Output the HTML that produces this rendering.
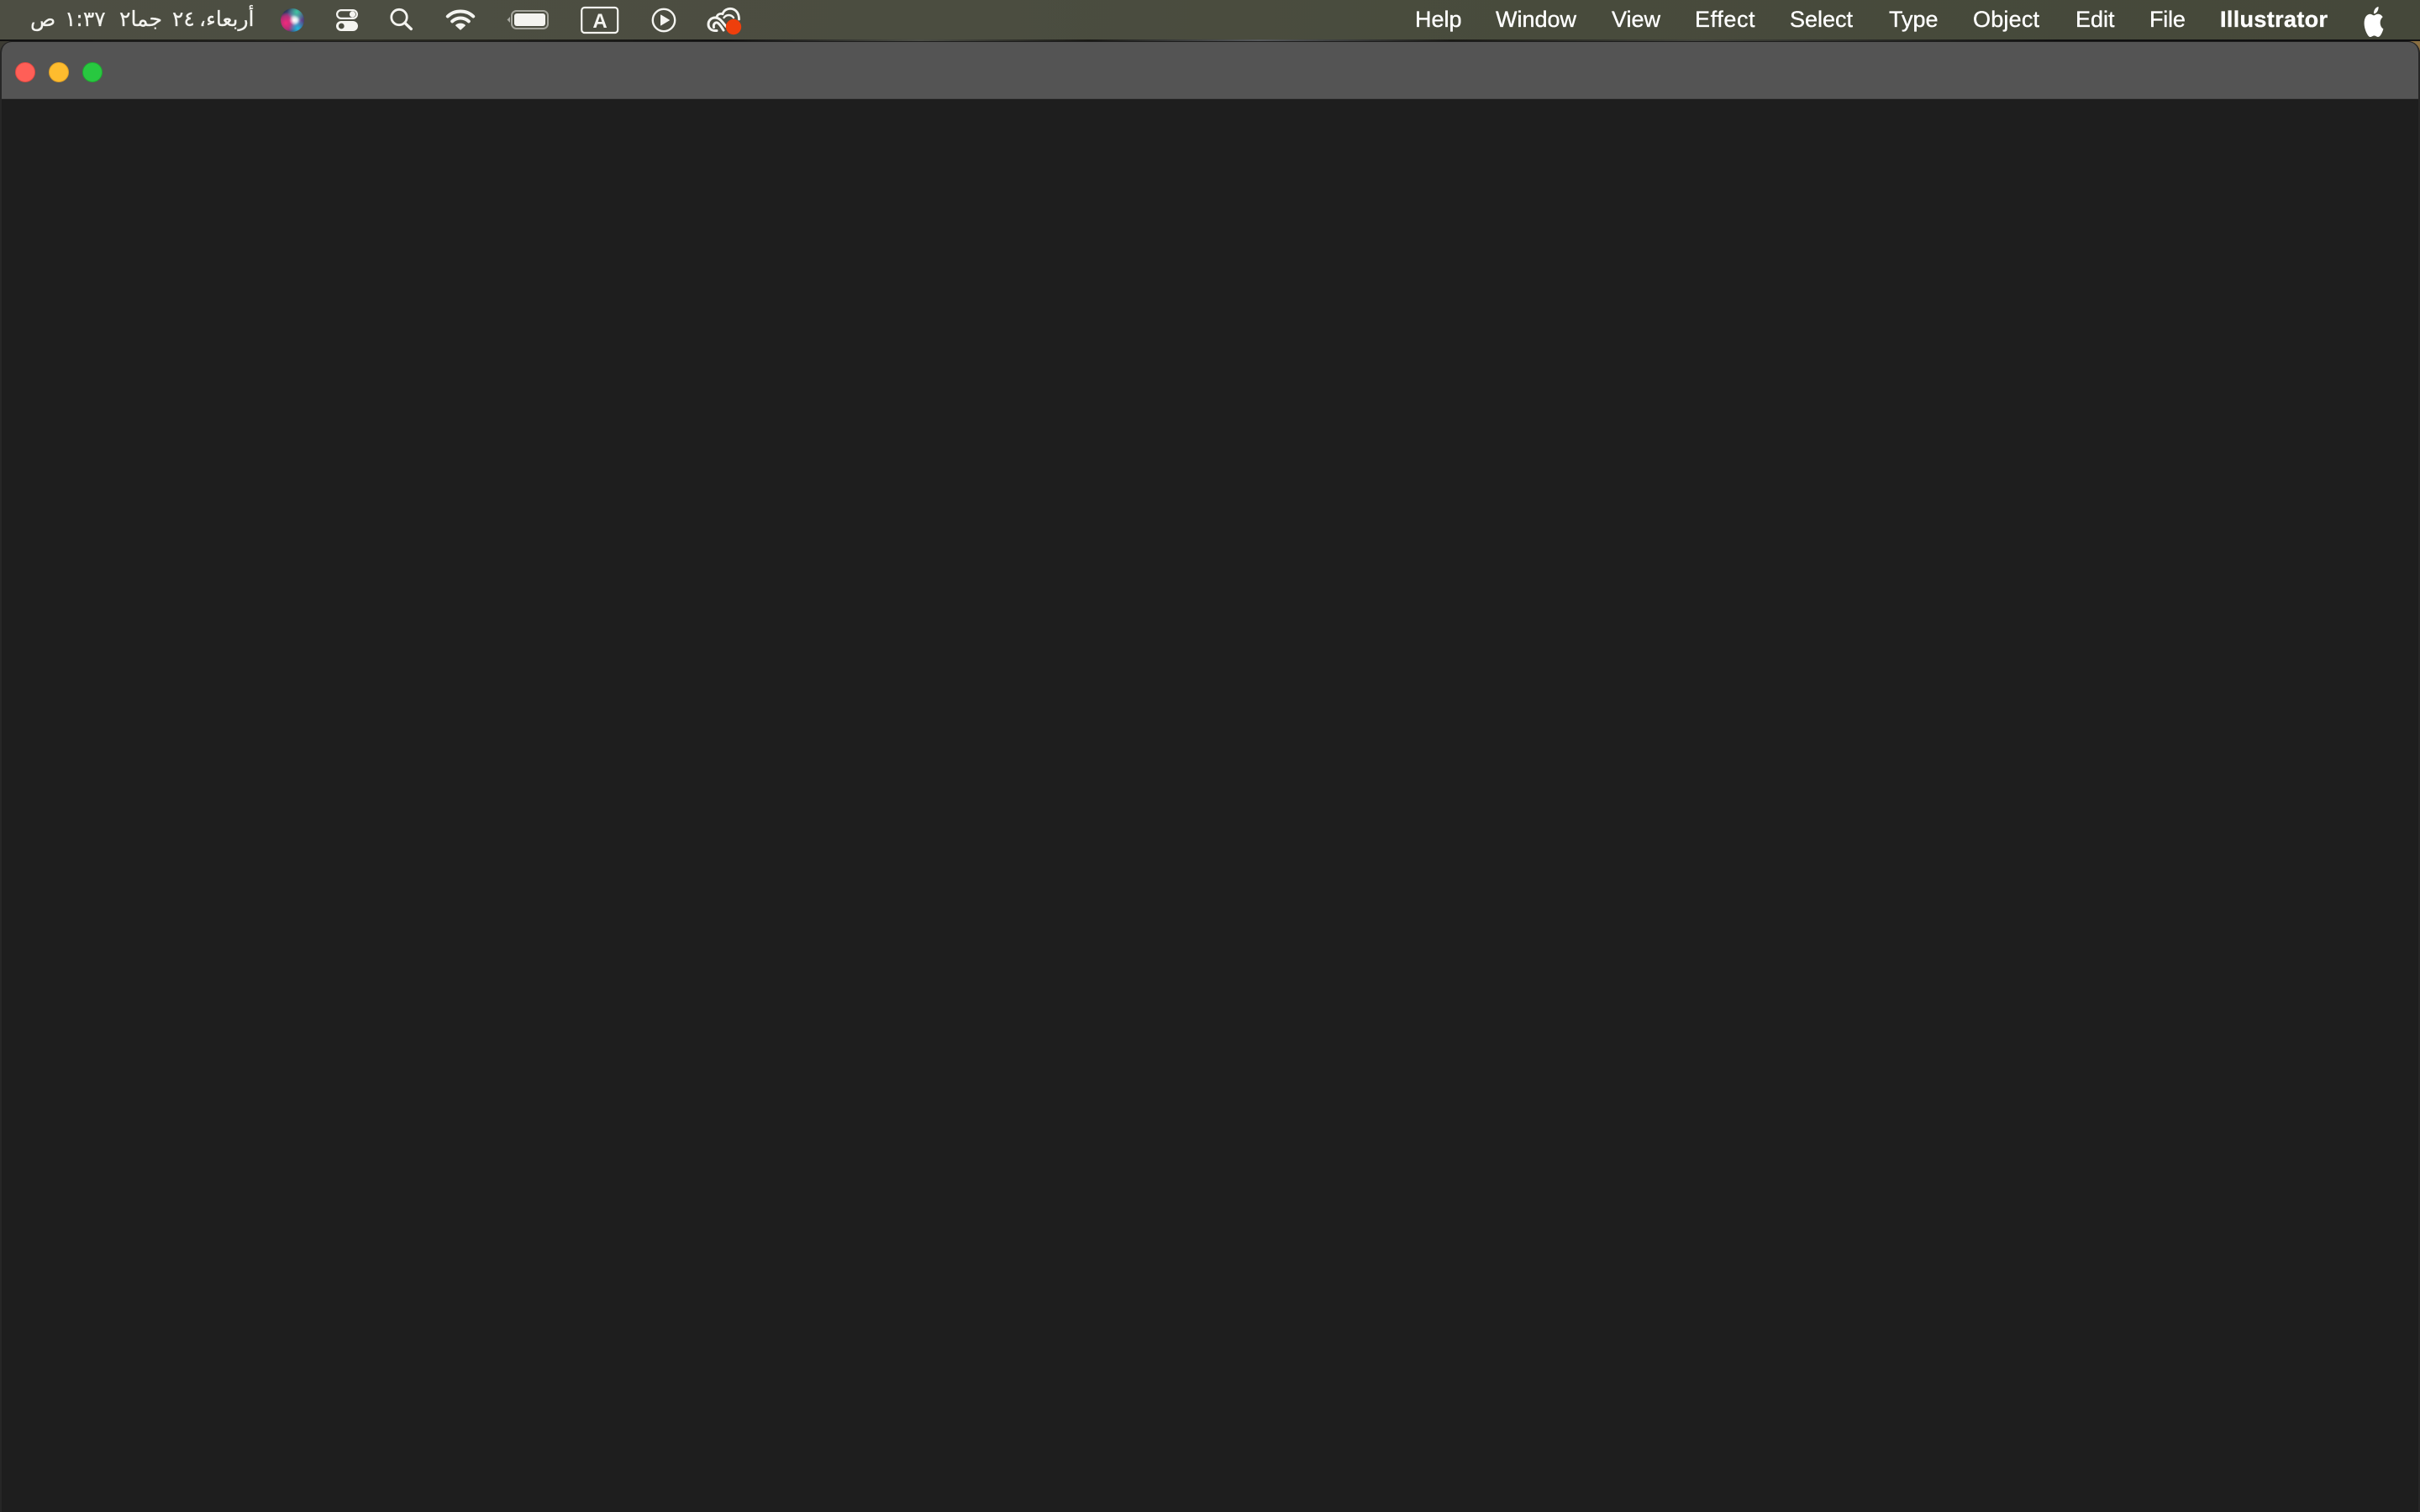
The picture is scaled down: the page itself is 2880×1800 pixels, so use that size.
<!DOCTYPE html>
<html lang="en">
<head>
<meta charset="utf-8">
<title>Illustrator</title>
<style>
html,body{margin:0;padding:0;width:2880px;height:1800px;overflow:hidden;background:#000;}
#bar{position:absolute;left:0;top:0;width:2880px;height:48px;background:linear-gradient(90deg,#4d4e43 0%,#4b4d40 40%,#484b3c 65%,#45483a 100%);}
#line{position:absolute;left:0;top:47px;width:2880px;height:2px;background:linear-gradient(90deg,#111 0%,#2a2a22 15%,#111 30%,#4a4c44 38%,#1a1a16 45%,#55585a 52%,#1a1a16 60%,#40423a 70%,#111 85%,#111 100%);}
#corner{position:absolute;right:0;top:48px;width:24px;height:24px;background:#8a6f42;}
#corner2{position:absolute;left:0;top:48px;width:24px;height:24px;background:#3c3b33;}
#win{position:absolute;left:0;top:49px;width:2880px;height:1751px;background:#1e1e1e;border-radius:14px 14px 0 0;overflow:hidden;box-sizing:border-box;border-left:2px solid #272727;border-right:2px solid #272727;}
#title{position:absolute;left:0;top:1px;right:0;height:68px;background:#545454;border-radius:12px 12px 0 0;box-shadow:inset 0 -1px 0 #4a4a4a;}
.dot{position:absolute;top:74px;width:24px;height:24px;border-radius:50%;box-sizing:border-box;}
.t{position:absolute;top:5px;height:36px;font:27px/36px "Liberation Sans",sans-serif;color:#fff;white-space:nowrap;-webkit-text-stroke:.35px #fff;}
.a{position:absolute;top:4px;line-height:38px;font-size:25px;font-family:"DejaVu Sans",sans-serif;color:#f4f4f0;white-space:nowrap;direction:rtl;unicode-bidi:isolate;-webkit-text-stroke:.25px #f4f4f0;}
svg{position:absolute;overflow:visible;}
</style>
</head>
<body>
<div id="corner"></div>
<div id="corner2"></div>
<div id="bar"></div>
<div id="line"></div>
<div id="win"><div id="title"></div></div>

<div class="dot" style="left:18px;background:#ff5f57;border:1px solid #e14942;"></div>
<div class="dot" style="left:58px;background:#febc2e;border:1px solid #df9f25;"></div>
<div class="dot" style="left:98px;background:#28c840;border:1px solid #1fa930;"></div>

<!-- Arabic clock -->
<span class="a" style="left:36px;">ص</span>
<span class="a" style="left:77px;">١:٣٧</span>
<span class="a" style="left:142px;">جما٢</span>
<span class="a" style="left:205px;">٢٤</span>
<span class="a" style="left:237px;letter-spacing:-.2px;">أربعاء،</span>

<!-- Siri -->
<svg style="left:332px;top:8px" width="32" height="32" viewBox="0 0 32 32">
<defs>
<radialGradient id="s1" cx="58%" cy="50%" r="58%"><stop offset="0" stop-color="#fff"/><stop offset=".2" stop-color="#e4e0f2"/><stop offset=".48" stop-color="#6a4a96"/><stop offset="1" stop-color="#1f3550"/></radialGradient>
<radialGradient id="s2" cx="22%" cy="62%" r="46%"><stop offset="0" stop-color="#f02a7c"/><stop offset=".6" stop-color="#d02a78" stop-opacity=".8"/><stop offset="1" stop-color="#e9307f" stop-opacity="0"/></radialGradient>
<radialGradient id="s3" cx="68%" cy="16%" r="40%"><stop offset="0" stop-color="#3fc7a0"/><stop offset="1" stop-color="#3fc7a8" stop-opacity="0"/></radialGradient>
<radialGradient id="s4" cx="72%" cy="85%" r="38%"><stop offset="0" stop-color="#22b8dc"/><stop offset="1" stop-color="#26b4d8" stop-opacity="0"/></radialGradient>
<radialGradient id="s5" cx="58%" cy="50%" r="22%"><stop offset="0" stop-color="#fff"/><stop offset="1" stop-color="#fff" stop-opacity="0"/></radialGradient>
</defs>
<circle cx="16" cy="16" r="14" fill="url(#s1)"/>
<circle cx="16" cy="16" r="14" fill="url(#s2)"/>
<circle cx="16" cy="16" r="14" fill="url(#s3)"/>
<circle cx="16" cy="16" r="14" fill="url(#s4)"/>
<circle cx="16" cy="16" r="14" fill="url(#s5)"/>
</svg>

<!-- Control center -->
<svg style="left:400px;top:10px" width="27" height="28" viewBox="0 0 27 28">
<rect x="1.1" y="2.1" width="23.8" height="9.8" rx="4.9" fill="none" stroke="#f4f4f0" stroke-width="2.2"/>
<circle cx="19.5" cy="7" r="3.6" fill="#f4f4f0"/>
<rect x="0" y="15" width="26" height="12" rx="6" fill="#f4f4f0"/>
<circle cx="6.3" cy="21" r="3.4" fill="#4a4c40"/>
</svg>

<!-- Search -->
<svg style="left:462px;top:8px" width="32" height="32" viewBox="0 0 32 32">
<circle cx="13" cy="12.5" r="9.2" fill="none" stroke="#f4f4f0" stroke-width="2.8"/>
<path d="M19.8 19.3L27.3 26.5" stroke="#f4f4f0" stroke-width="3.4" stroke-linecap="round" fill="none"/>
</svg>

<!-- Wifi -->
<svg style="left:530px;top:10px" width="36" height="27" viewBox="0 0 36 27">
<path d="M2.8 9.5C11 1.5 25 1.5 33.2 9.5" fill="none" stroke="#f4f4f0" stroke-width="4" stroke-linecap="round"/>
<path d="M8.2 15.4C13.8 10.2 22.2 10.2 27.8 15.4" fill="none" stroke="#f4f4f0" stroke-width="4" stroke-linecap="round"/>
<path d="M18 25L12.8 20.2C15.6 17.7 20.4 17.7 23.2 20.2Z" fill="#f4f4f0" stroke="#f4f4f0" stroke-width="1.4" stroke-linejoin="round"/>
</svg>

<!-- Battery -->
<svg style="left:602px;top:11px" width="52" height="25" viewBox="0 0 52 25">
<path d="M5 9L1.5 12.5L5 16Z" fill="#a9aaa2"/>
<rect x="7" y="2" width="43" height="21" rx="5.5" fill="none" stroke="#a4a59c" stroke-width="2"/>
<rect x="10" y="5" width="37" height="15" rx="3" fill="#f4f4f0"/>
</svg>

<!-- A input -->
<svg style="left:691px;top:8px" width="46" height="32" viewBox="0 0 46 32">
<rect x="1.2" y="1" width="43" height="30" rx="3.5" fill="none" stroke="#f4f4f0" stroke-width="2.2"/>
<text x="23" y="25" text-anchor="middle" font-family="Liberation Sans,sans-serif" font-size="24" font-weight="700" fill="#f4f4f0">A</text>
</svg>

<!-- Play -->
<svg style="left:774px;top:8px" width="32" height="32" viewBox="0 0 32 32">
<circle cx="16" cy="16" r="13.2" fill="none" stroke="#f4f4f0" stroke-width="2.4"/>
<path d="M12.5 10L22.5 16L12.5 22Z" fill="#f4f4f0" stroke="#f4f4f0" stroke-width="1" stroke-linejoin="round"/>
</svg>

<!-- Creative Cloud -->
<svg style="left:840px;top:8px" width="44" height="36" viewBox="0 0 44 36">
<path d="M13 28.5H11C6 28.5 3 25 3 21C3 16.5 6.5 13 11 13C15 13 17.5 15.5 20 18.5L24 23.5" fill="none" stroke="#f4f4f0" stroke-width="3" stroke-linecap="round"/>
<path d="M9.5 24.5C8.5 20.5 11.5 18 14 19.2C16.5 20.5 18.5 24 21 28" fill="none" stroke="#f4f4f0" stroke-width="3" stroke-linecap="round"/>
<path d="M13 12C14 9 17 8 20 8.6C21.5 4 26 1.6 31 2.5C36.5 3.5 39.5 8.5 39.5 15" fill="none" stroke="#f4f4f0" stroke-width="2.8" stroke-linecap="round"/>
<path d="M21.5 13C24.5 9 30 9 33 13" fill="none" stroke="#f4f4f0" stroke-width="2.4" stroke-linecap="round"/>
<circle cx="33" cy="24" r="9.2" fill="#ee3f0c"/>
</svg>

<!-- Menu items -->
<span class="t" style="left:1684px;">Help</span>
<span class="t" style="left:1780px;">Window</span>
<span class="t" style="left:1918px;">View</span>
<span class="t" style="left:2017px;letter-spacing:.6px;">Effect</span>
<span class="t" style="left:2130px;">Select</span>
<span class="t" style="left:2248px;">Type</span>
<span class="t" style="left:2348px;letter-spacing:.2px;">Object</span>
<span class="t" style="left:2470px;">Edit</span>
<span class="t" style="left:2558px;letter-spacing:-.2px;">File</span>
<span class="t" style="left:2642px;font-weight:700;letter-spacing:.35px;">Illustrator</span>
<svg style="left:2811px;top:8px" width="28" height="36" viewBox="0 0 24 24" preserveAspectRatio="none">
<path fill="#fff" d="M12.152 6.896c-.948 0-2.415-1.078-3.96-1.04-2.04.027-3.91 1.183-4.961 3.014-2.117 3.675-.546 9.103 1.519 12.09 1.013 1.454 2.208 3.09 3.792 3.039 1.52-.065 2.09-.987 3.935-.987 1.831 0 2.35.987 3.96.948 1.637-.026 2.676-1.48 3.676-2.948 1.156-1.688 1.636-3.325 1.662-3.415-.039-.013-3.182-1.221-3.22-4.857-.026-3.04 2.48-4.494 2.597-4.559-1.429-2.09-3.623-2.324-4.39-2.376-2-.156-3.675 1.09-4.61 1.09zM15.53 3.83c.843-1.012 1.4-2.427 1.245-3.83-1.207.052-2.662.805-3.532 1.818-.78.896-1.454 2.338-1.273 3.714 1.338.104 2.715-.688 3.559-1.701"/>
</svg>
</body>
</html>
